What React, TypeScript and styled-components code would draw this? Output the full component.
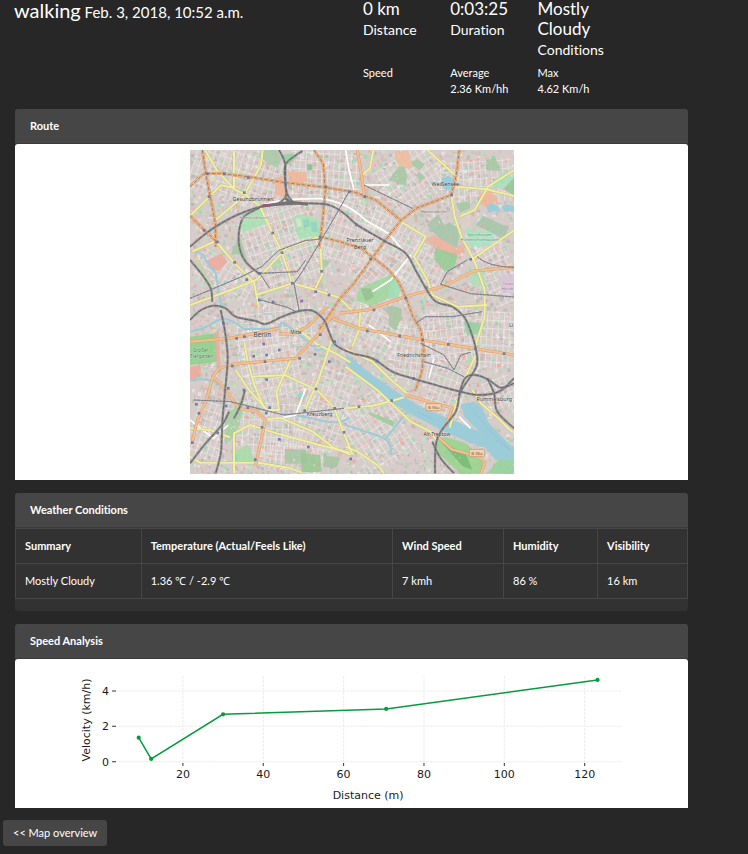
import React from "react";
import styled, { createGlobalStyle } from "styled-components";

const GlobalStyle = createGlobalStyle`
  *, *::before, *::after { box-sizing: border-box; }
  body {
    margin: 0;
    background: #272727;
    color: #fff;
    font-family: Lato, "Liberation Sans", sans-serif;
    font-size: 11px;
    font-variant-ligatures: none;
  }
`;

const Page = styled.div`
  display: flex;
  flex-direction: column;
  align-items: flex-start;
`;

const Header = styled.header`
  display: grid;
  width: 100%;
  grid-template-columns: 4fr 1fr 1fr 1fr 1fr;
  grid-template-rows: auto auto;
  row-gap: 5px;
  padding: 0 36px 0 14px;
`;

const Title = styled.h1`
  grid-row: 1 / span 2;
  margin: 0;
  font-size: 20px;
  font-weight: 400;
  line-height: 20px;
`;

const When = styled.small`
  font-size: 15px;
`;

const Stat = styled.div<{ $column: number }>`
  grid-column: ${(p) => p.$column};
  margin-top: -1px;
  padding-right: 16px;
  line-height: 20px;
`;

const StatValue = styled.div`
  font-size: 17px;
`;

const StatLabel = styled.div`
  padding-top: 1px;
  font-size: 14px;
`;

const Pace = styled.div<{ $column: number }>`
  grid-column: ${(p) => p.$column};
  font-size: 11px;
  line-height: 16px;
  white-space: nowrap;
`;

const Main = styled.main`
  width: 90%;
  margin: 12px 0 12px 15px;
  display: flex;
  flex-direction: column;
  gap: 13px;
`;

const Card = styled.section<{ $squareBottom?: boolean }>`
  overflow: hidden;
  border-radius: ${(p) => (p.$squareBottom ? "3px 3px 0 0" : "3px")};
  background: #323232;
`;

const CardTitle = styled.h2`
  margin: 0;
  padding: 0 15px;
  border-bottom: 1px solid #3a3a3a;
  background: #464646;
  font-size: 11px;
  font-weight: 700;
  line-height: 34px;
`;

const Paper = styled.div<{ $pad: number }>`
  display: flex;
  justify-content: center;
  padding: ${(p) => p.$pad}px 0;
  border-radius: 3px 3px 0 0;
  background: #fff;
`;

const Table = styled.table`
  width: 100%;
  margin-bottom: 12px;
  border-collapse: collapse;
  table-layout: fixed;
  text-align: left;
`;

const Col = styled.col<{ $share: number }>`
  width: ${(p) => p.$share}%;
`;

const Cell = styled.td`
  height: 35px;
  padding: 0 9px 1px;
  border: 1px solid #464646;
  font-weight: 400;
`;

const HeadCell = styled(Cell)`
  font-weight: 700;
`;

const MapDrawing = styled.svg`
  display: block;
  width: 324px;
  max-width: 100%;
  height: auto;
`;

const ChartDrawing = styled.svg`
  display: block;
  width: 100%;
  height: auto;
  font-family: "DejaVu Sans", sans-serif;
  font-size: 11px;
`;

const BackLink = styled.a`
  margin-left: 3px;
  padding: 0 10px;
  border-radius: 3px;
  background: #464646;
  color: #fff;
  font-size: 11px;
  line-height: 26px;
  text-decoration: none;
`;

/* Small deterministic generator for the building blocks of the map. */
function makeRandom(seed: number) {
  let s = seed;
  return () => {
    s = (s * 16807) % 2147483647;
    return s / 2147483647;
  };
}

const blockColors = ["#bfb5b1", "#cac1bd", "#c9bdb8", "#ebe5e3", "#e2cbc8", "#aedcb2", "#c4e4c6", "#e8b3ae", "#eadfe2", "#b9b4b6", "#97dcb3", "#efab9c"];
const random = makeRandom(4217);
const blocks = Array.from({ length: 6000 }, () => ({
  x: 13 + random() * 972,
  y: 15 + random() * 972,
  w: 3 + random() * 9,
  h: 3 + random() * 9,
  c: blockColors[Math.floor(Math.pow(random(), 1.25) * blockColors.length)],
}));

type Point = [number, number];

/* Catmull-Rom curve through the given points. */
function smooth(points: Point[]) {
  const at = (i: number) => points[Math.max(0, Math.min(points.length - 1, i))];
  let d = `M${points[0][0]} ${points[0][1]}`;
  for (let i = 0; i < points.length - 1; i++) {
    const [a, b, c, e] = [at(i - 1), at(i), at(i + 1), at(i + 2)];
    d += `C${b[0] + (c[0] - a[0]) / 6} ${b[1] + (c[1] - a[1]) / 6} ${c[0] - (e[0] - b[0]) / 6} ${c[1] - (e[1] - b[1]) / 6} ${c[0]} ${c[1]}`;
  }
  return d;
}

type Area = { d: string; c: string };

const northWestAreas: Area[] = [
  { d: "M228 15l45 0 15 25-12 28-26-8-28-28z", c: "#a9c9a9" },
  { d: "M291 30l30-5 15 12-30 22z", c: "#8dd49b" },
  { d: "M305 80l55 0 5 30-50 10z", c: "#f0b595" },
  { d: "M268 98l30-5 0 66-30-12z", c: "#f0b595" },
  { d: "M365 58l15 0 0 18-15 0z", c: "#7fbf8c" },
  { d: "M176 205q30-18 55-10l12 40-72 30q-8-20 5-60z", c: "#a6e3b4" },
  { d: "M320 218l28-10 48 12 6 50-62 12z", c: "#a6e3b4" },
  { d: "M330 222l14-3 5 24-14 4z", c: "#d6e5d4" },
  { d: "M352 225l18-4 4 22-18 5z", c: "#8cd6c0" },
  { d: "M375 232l18-2 4 30-18 2z", c: "#8cd6c0" },
  { d: "M162 275l24 75-26-22-24 2 8-24z", c: "#a4c9a2" },
  { d: "M405 342l30 5-22 34z", c: "#a9c9a9" },
  { d: "M250 352l30-8 12 22-28 8z", c: "#b4d2b0" },
  { d: "M20 345l20 0 50 85-15 10z", c: "#c5d0ad" },
  { d: "M60 348l45-22 20 24-25 28-20-4z", c: "#eda99e" },
];

const northEastAreas: Area[] = [
  { d: "M148 18l40 0 14 50-30 4-24-30z", c: "#efbc9c" },
  { d: "M128 105l32-42 15 3 10 28-5 28z", c: "#a5c8a1" },
  { d: "M198 50l16-8 24 15-16 17-22-12z", c: "#a5c8a1" },
  { d: "M208 90l14-8 17 15-14 12z", c: "#a5c8a1" },
  { d: "M420 45l30-5 16 38-45-2z", c: "#a5c8a1" },
  { d: "M400 145l38-10 15 32-32 20-20-14z", c: "#f0b595" },
  { d: "M452 100l25-18 28 15-30 30-38 4z", c: "#a2e3b8" },
  { d: "M475 130l32-35v60z", c: "#91c894" },
  { d: "M330 175l40-6 5 20-32 14z", c: "#a5c8a1" },
  { d: "M243 240l34-32 20 32 14-8 32 22-8 55-48-22z", c: "#a5c5a8" },
  { d: "M235 285l30-15 70 38 18-14 3 28-40 15z", c: "#efb19c" },
  { d: "M268 308l68 22-10 40-28 10-32-38z", c: "#94cc93" },
  { d: "M355 245l45 15 50 0-18 42-60 5z", c: "#a5e5c0" },
  { d: "M390 240l22-27 75 34-10 38-38-22z", c: "#a5c5a8" },
  { d: "M343 225q15-20 30-6l2 28-22 8z", c: "#dcd0c7" },
  { d: "M40 430l95-40 20 14-12 50-65 28-48-15z", c: "#9fd79d" },
  { d: "M45 430l30 0 10 25-25 15z", c: "#97bf91" },
  { d: "M130 422l20-20 18 20-12 40-28-5z", c: "#9de1bb" },
  { d: "M467 390l40-3v56h-40z", c: "#d7c4d6" },
  { d: "M370 388l42-10 8 42-42 5z", c: "#b0dfb7" },
  { d: "M110 490l30-8 28 10 0 26-20 40-20-20 3-30z", c: "#a6c6a0" },
];

const southWestAreas: Area[] = [
  { d: "M13 95l80-10 5 85-85 10z", c: "#8ed18a" },
  { d: "M13 185l30-4 5 25-22 18-13 0z", c: "#eca89e" },
  { d: "M88 80l12-3 5 110-12 2z", c: "#eeaaa0" },
  { d: "M118 330l28-20 32-50-16 100-30 50-15 2z", c: "#a3cfa0" },
  { d: "M298 432l64 2v42h-64z", c: "#a5c6a2" },
  { d: "M345 445l58 5 5 50-60 2z", c: "#98c892" },
  { d: "M413 452l50 5-8 30-40 0z", c: "#a5c6a2" },
  { d: "M148 438l38-20 20 42-10 18-50-6z", c: "#a7dda6" },
  { d: "M335 268l18-8 5 20-18 8z", c: "#8bd9c2" },
  { d: "M140 450l16-2v24h-16z", c: "#8bd9c2" },
];

const southEastAreas: Area[] = [
  { d: "M354 48l60 8-20 32-30 4z", c: "#90d19e" },
  { d: "M70 320l78 30-5 16-75-38z", c: "#99cf99" },
  { d: "M275 405l22-10 65 20 58 55-20 35-55 2-70-65z", c: "#95d58c" },
  { d: "M425 505l25-32 35-28 22 15v47z", c: "#93d39d" },
  { d: "M290 415l70 30 20 50-30-12z", c: "#79ba75" },
];

const water = [
  "M16 318q30-3 42 22t32 44l10 62 8 40",
  "M13 560q45-8 72-28t60 0 28 20 55 0 58-15 50 28 55 50 68-24",
  "M13 707q70-14 102 22",
  "M285 805q70 8 125 22t80-10",
  "M480 840l105 35q35 15 30 55",
  "M600 880l70-85 20-10",
];

const majorRoads = [
  "M13 125l40-38 45-2 90 10 110 18 120 14 90 15 60 22 77 61",
  "M50 15l10 70 18 90 12 65 0 65",
  "M13 212l42 42 40 38",
  "M402 275l60 15 65 20 35 28 45 35 30 35 24 50 22 60 22 35 10 60-7 70-20 55",
  "M821 15l-10 80-14 55-105 40-50 40-42 55-45 60-50 70-45 50-60 90",
  "M385 15l28 42 6 78-8 90-6 50-5 35",
  "M460 505l85-10 105-37 125-35 90-45 125-12",
  "M13 590l120-10 150-30",
  "M280 566l42 2 50-28 50-55",
  "M82 695l18-25 40-12 190-18 75-80 40-58",
  "M440 520l80 30 190 35 90 15 185 30",
  "M82 695l22 20 30 40 25 35 55 10 25 25-12 58-18 80",
  "M20 890l14-60 28-65 20-70",
  "M660 750l75 22 65 16-20 55",
  "M748 868l50 45 80 22 20 15-15 45",
  "M515 15l10 60 12 80",
];

const minorRoads = [
  "M60 18l35 60 52 55 30 15 45 35 35 75 30 60 30 90",
  "M13 213l50-50 42-42 42 8",
  "M145 20v108",
  "M176 150l50-90 5-45",
  "M13 480l130-48 70-28 90-95 100-34",
  "M405 310l4 80-20 40",
  "M210 450l110-35 65 18 75 25 45 45",
  "M20 320l70-32 55 65 60 60 15 75",
  "M90 225l85-72",
  "M645 230l75 45-35 60 40 70 15 45 75 35 90-5",
  "M563 15l-10 55-30 25",
  "M725 15l50 45 38 35",
  "M797 150l10 65 20 60 40 75 30 85 0 80-30 95",
  "M812 125l90 8 83 20",
  "M985 75l-78 50-40 70-45 20",
  "M985 256l-65 45-65 45",
  "M176 590l10 60 20 70 30 70",
  "M150 675l40 60 55 60 35 0-8-55 50-110",
  "M200 695l100-4 95 45 50 52 55 140",
  "M440 580l-40 120-42 95",
  "M330 548l65 50 60 30 40 25",
  "M13 850l60 5 60 22",
  "M145 985v-120l48-25 90 28 110 30 100 25",
  "M245 822l40-3 95 40 65 50 50 20",
  "M13 935l30 18 175 0 90 15 40 15",
  "M480 665l95 70 100 95 60 30 20 30",
  "M480 612l80 38 60 58 50 42",
  "M480 905l35 15 60 40 20 25",
  "M869 633l-35 75-20 60-22 80",
  "M480 790l80-8 60-15 35-10",
  "M525 480l-5 75-20 50",
  "M860 735l25 40 45 38 50 48",
];

const railways = ([
  [[13, 305], [75, 255], [150, 212], [230, 184], [300, 178], [370, 175], [430, 180], [475, 205], [515, 240], [595, 287], [660, 325], [695, 385], [745, 465], [800, 485], [835, 515], [852, 550], [870, 610], [872, 665], [825, 740], [810, 800], [755, 880], [748, 985]],
  [[280, 15], [298, 55], [299, 115], [306, 150], [325, 175]],
  [[350, 18], [300, 58], [300, 120], [300, 155], [275, 178]],
  [[222, 188], [175, 215], [160, 260], [162, 310], [180, 350], [222, 388]],
  [[13, 345], [50, 390], [75, 430], [80, 470]],
  [[13, 525], [45, 496], [85, 482], [120, 490], [150, 515], [210, 528], [240, 537], [290, 515], [340, 498], [380, 497], [415, 525], [430, 560], [450, 600], [500, 625], [560, 640], [620, 680], [680, 700], [750, 720], [825, 740], [880, 750], [940, 740], [985, 700]],
  [[105, 495], [118, 560], [126, 640], [118, 740], [110, 830], [106, 920], [90, 985]],
  [[820, 750], [838, 700], [870, 690], [910, 705], [945, 728], [985, 715]],
  [[905, 700], [925, 745], [935, 800], [985, 850]],
  [[740, 890], [765, 940], [805, 985]],
  [[13, 955], [60, 895], [110, 838], [130, 800]],
  [[178, 735], [165, 780], [145, 820]],
] as Point[][]).map(smooth);

const tramRoads = [
  "M490 140l-45 80-95 160-25 35 15 80",
  "M225 385l110-5 25-35",
  "M13 460l60-25 95-40 60-30 50-48 80-30 45-5",
  "M225 465l80 22 30 15",
  "M222 385l30 45",
  "M535 120l145 70",
  "M765 418l90 28 130 10",
  "M765 418l20-38 60-35",
  "M875 335q30 30 110 32",
  "M25 765l110 5 160 40 180-20",
  "M690 535l30-20 80 0 90-15",
  "M705 595l70 35 30 45 20-45 30-8",
  "M715 650l70 20 50 25",
];

const stations: Point[] = [
  [65, 86], [116, 86], [188, 98], [299, 115], [421, 126], [176, 143], [70, 155], [491, 140], [261, 264], [289, 323], [147, 352],
  [403, 276], [415, 177], [55, 256], [95, 291], [183, 404], [223, 385], [221, 465], [262, 471], [348, 468], [408, 379], [390, 440],
  [430, 450], [320, 415], [113, 535], [176, 575], [153, 580], [234, 597], [204, 634], [243, 630], [281, 615], [238, 650],
  [140, 663], [243, 704], [404, 569], [388, 628], [342, 640], [447, 590], [431, 650], [391, 732], [32, 778], [128, 730],
  [175, 735], [40, 805], [121, 783], [187, 788], [242, 804], [252, 788], [96, 864], [229, 847], [20, 893], [281, 883],
  [368, 906], [209, 944], [447, 790], [357, 797], [475, 862], [545, 558], [642, 573], [711, 585], [788, 598], [869, 612],
  [684, 700], [520, 785], [618, 767], [825, 740], [574, 648], [495, 942], [555, 342], [597, 288], [513, 240], [537, 155],
  [798, 150], [855, 343], [722, 428], [660, 459], [565, 495], [955, 626],
];

const greyStreets = [
  [13, 15, 290, 160, 18], [180, 190, 230, 230, -18], [315, 15, 210, 140, 4], [410, 160, 170, 200, 18], [585, 25, 190, 150, -33],
  [540, 210, 160, 120, 28], [495, 330, 170, 120, 42], [650, 300, 120, 150, 27], [760, 45, 220, 130, -4], [885, 270, 98, 210, -25],
  [145, 480, 240, 130, -6], [170, 600, 180, 170, -12], [350, 670, 140, 240, 18], [475, 490, 180, 120, 28], [615, 530, 120, 180, 8],
  [715, 490, 150, 160, -7], [865, 500, 120, 170, 3], [480, 750, 180, 220, -32], [145, 770, 210, 180, 3], [18, 770, 110, 170, 18],
  [240, 890, 180, 95, 10], [720, 650, 120, 180, 20], [25, 350, 190, 90, 30], [900, 700, 85, 90, -20],
];

type MapLabel = { x: number; y: number; t: string; s: number; c?: string };
const labels: MapLabel[] = [
  { x: 202, y: 168, t: "Gesundbrunnen", s: 16 },
  { x: 202, y: 221, t: "Humboldthain", s: 12, c: "#906d5b" },
  { x: 779, y: 122, t: "Weißensee", s: 16 },
  { x: 745, y: 204, t: "Heinersdorfer", s: 12, c: "#626262" },
  { x: 523, y: 291, t: "Prenzlauer", s: 16 },
  { x: 523, y: 311, t: "Berg", s: 16 },
  { x: 881, y: 272, t: "Sportforum", s: 13, c: "#338867" },
  { x: 881, y: 288, t: "Hohenschönhausen", s: 12, c: "#338867" },
  { x: 968, y: 420, t: "Gewe", s: 12, c: "#8b668c" },
  { x: 966, y: 436, t: "Herzb", s: 12, c: "#8b668c" },
  { x: 230, y: 577, t: "Berlin", s: 19 },
  { x: 331, y: 567, t: "Mitte", s: 14 },
  { x: 45, y: 620, t: "Großer", s: 14, c: "#367855" },
  { x: 48, y: 638, t: "Tiergarten", s: 14, c: "#367855" },
  { x: 402, y: 813, t: "Kreuzberg", s: 16 },
  { x: 685, y: 635, t: "Friedrichshain", s: 15 },
  { x: 976, y: 546, t: "Li", s: 16 },
  { x: 926, y: 768, t: "Rummelsburg", s: 16 },
  { x: 754, y: 872, t: "Alt-Treptow", s: 15 },
  { x: 242, y: 510, t: "Spree", s: 10, c: "#5c9bb4" },
  { x: 389, y: 605, t: "Spree", s: 12, c: "#5c9bb4" },
];

function Areas({ items }: { items: Area[] }) {
  return <>{items.map((a) => <path key={a.d} d={a.d} fill={a.c} opacity="0.85" />)}</>;
}

function Lines({ items, color, width, dash }: { items: string[]; color: string; width: number; dash?: string }) {
  return (
    <g fill="none" stroke={color} strokeWidth={width} strokeDasharray={dash} strokeLinejoin="round">
      {items.map((d) => <path key={d} d={d} />)}
    </g>
  );
}

function CityMap() {
  return (
    <MapDrawing viewBox="13 15 972 972" role="img" aria-label="Route map of Berlin">
      <defs>
        <pattern id="streets" width="17" height="25" patternUnits="userSpaceOnUse">
          <path d="M0 1H17M1 0V25" stroke="#f5f3f2" strokeWidth="2" fill="none" />
        </pattern>
      </defs>
      <rect x="13" y="15" width="972" height="972" fill="#d6cdca" />
      {blocks.map((b, i) => <rect key={i} x={b.x} y={b.y} width={b.w} height={b.h} fill={b.c} opacity="0.8" />)}
      {greyStreets.map(([x, y, w, h, angle], i) => (
        <g key={i} transform={`rotate(${angle} ${x + w / 2} ${y + h / 2})`}>
          <rect x={x} y={y} width={w} height={h} fill="url(#streets)" opacity="0.8" />
        </g>
      ))}
      <Areas items={northWestAreas} />
      <g transform="translate(480 0)"><Areas items={northEastAreas} /></g>
      <g transform="translate(0 480)"><Areas items={southWestAreas} /></g>
      <g transform="translate(480 480)"><Areas items={southEastAreas} /></g>
      {blocks.slice(0, 1400).map((b, i) => <rect key={i} x={b.x} y={b.y} width={b.w / 2} height={b.h / 2} fill={b.c} opacity="0.8" />)}
      <Lines items={water} color="#9bcbd9" width={6} />
      <g fill="#9dccd9">
        <path d="M480 625L560 690 640 745 700 783 780 817 860 850 900 872 930 885 985 905V945H930L900 910 850 892 780 862 690 815 630 780 545 720 480 655Z" />
        <path d="M825 778l40-8 25 20 20 45 75 77v25l-65-40-50-48-35-35z" />
        <path d="M768 100l20-8 18 12 0 28-25 4-15-18z" />
        <path d="M902 185l16-12 20 12 8 16-25-2-12 6z" />
        <path d="M948 185l12-7 28 6v16l-32 0z" />
      </g>
      <path d="M695 800l50 25M852 785l55 65 70 70M930 885l45 30" stroke="#8caecb" strokeWidth="2" strokeDasharray="5 4" fill="none" />
      <g fill="none" stroke="#fff" strokeWidth="5">
        <path d="M225 183q60-25 180-22 80 10 135 65l70 40 45 55" />
        <path d="M675 330l-60 75-55 35M535 120l75 0M730 700l15-60M550 540l65 50M13 825l70 55 45-40M820 815l35 35M360 730l-30 80-50 10M480 15l10 60 15 60" />
      </g>
      <Lines items={minorRoads} color="#bcbc88" width={8} />
      <Lines items={minorRoads} color="#f2efa0" width={6} />
      <Lines items={majorRoads} color="#d79e6f" width={9} />
      <Lines items={majorRoads} color="#f3c08e" width={6} />
      <Lines items={majorRoads.slice(0, 6)} color="#9b7f6c" width={3} dash="12 4" />
      <g fill="none" stroke="#8d8d83" strokeWidth="3">
        {tramRoads.map((d) => <path key={d} d={d} />)}
        <g stroke="#7e819f" strokeDasharray="7 4">{tramRoads.map((d) => <path key={d} d={d} />)}</g>
      </g>
      <Lines items={railways} color="#929192" width={7} />
      <Lines items={railways} color="#666568" width={3} dash="13 4" />
      <path d="M227 184l90-12 50 6M300 160l20 18" stroke="#757274" strokeWidth="9" fill="none" />
      <path d="M232 181h20" stroke="#a94e68" strokeWidth="7" />
      <g fill="#6873a5">
        {stations.map(([x, y]) => <rect key={`${x}-${y}`} x={x - 4} y={y - 4} width="8" height="8" opacity="0.9" />)}
      </g>
      {[{ x: 744, y: 787 }, { x: 874, y: 924 }].map((s) => (
        <g key={s.y}>
          <rect x={s.x - 23} y={s.y - 11} width="46" height="21" rx="3" fill="#f4d3ab" stroke="#c68e72" strokeWidth="2" />
          <text x={s.x} y={s.y + 5} textAnchor="middle" fontFamily="Noto Sans, sans-serif" fontSize="13" fill="#775748">B 96a</text>
        </g>
      ))}
      <g fontFamily="Noto Sans, sans-serif" textAnchor="middle">
        {labels.map((l) => (
          <text key={`${l.t}-${l.x}`} x={l.x} y={l.y} fontSize={l.s} fill={l.c ?? "#343434"} stroke="#fff" strokeOpacity="0.55" strokeWidth="2" paintOrder="stroke">{l.t}</text>
        ))}
      </g>
    </MapDrawing>
  );
}

const xTicks = [20, 40, 60, 80, 100, 120];
const yTicks = [0, 2, 4];
const samples: Point[] = [[9, 1.36], [12.1, 0.16], [30, 2.68], [70.6, 2.98], [123.2, 4.62]];
const toX = (m: number) => 87.5 + m * 4.017;
const toY = (v: number) => 103.7 - v * 17.7;

function SpeedChart() {
  return (
    <ChartDrawing viewBox="0 1 673 149" role="img" aria-label="Velocity in km/h by distance in metres">
      <g stroke="#ececec" strokeDasharray="3 1">
        {xTicks.map((t) => <line key={t} x1={toX(t)} x2={toX(t)} y1="18" y2="104" />)}
        {yTicks.map((t) => <line key={t} x1="103" x2="606" y1={toY(t)} y2={toY(t)} />)}
      </g>
      <g stroke="#333">
        {xTicks.map((t) => <line key={t} x1={toX(t)} x2={toX(t)} y1="105" y2="108" />)}
        {yTicks.map((t) => <line key={t} x1="97" x2="101" y1={toY(t)} y2={toY(t)} />)}
      </g>
      <g fill="#1a1a1a">
        {xTicks.map((t) => <text key={t} x={toX(t)} y="120" textAnchor="middle">{t}</text>)}
        {yTicks.map((t) => <text key={t} x="94" y={toY(t) + 4} textAnchor="end">{t}</text>)}
        <text x="353" y="141" textAnchor="middle">Distance (m)</text>
        <text transform="translate(75 62) rotate(-90)" textAnchor="middle">Velocity (km/h)</text>
      </g>
      <polyline points={samples.map(([m, v]) => `${toX(m)},${toY(v)}`).join(" ")} fill="none" stroke="#079b3d" strokeWidth="1.5" />
      {samples.map(([m, v]) => <circle key={m} cx={toX(m)} cy={toY(v)} r="2.1" fill="#079b3d" />)}
    </ChartDrawing>
  );
}

const stats = [
  { value: "0 km", label: "Distance" },
  { value: "0:03:25", label: "Duration" },
  { value: "Mostly Cloudy", label: "Conditions" },
];

const weather = [
  { name: "Summary", value: "Mostly Cloudy", share: 18.7 },
  { name: "Temperature (Actual/Feels Like)", value: "1.36 ℃ / -2.9 ℃", share: 37.4 },
  { name: "Wind Speed", value: "7 kmh", share: 16.5 },
  { name: "Humidity", value: "86 %", share: 14 },
  { name: "Visibility", value: "16 km", share: 13.4 },
];

export default function App() {
  return (
    <Page>
      <GlobalStyle />
      <Header>
        <Title>walking<When> Feb. 3, 2018, 10:52 a.m.</When></Title>
        {stats.map((s, i) => (
          <Stat key={s.label} $column={i + 2}>
            <StatValue>{s.value}</StatValue>
            <StatLabel>{s.label}</StatLabel>
          </Stat>
        ))}
        <Pace $column={2}>Speed</Pace>
        <Pace $column={3}>Average<br />2.36 Km/hh</Pace>
        <Pace $column={4}>Max<br />4.62 Km/h</Pace>
      </Header>
      <Main>
        <Card $squareBottom>
          <CardTitle>Route</CardTitle>
          <Paper $pad={6}><CityMap /></Paper>
        </Card>
        <Card>
          <CardTitle>Weather Conditions</CardTitle>
          <Table>
            <colgroup>{weather.map((w) => <Col key={w.name} $share={w.share} />)}</colgroup>
            <thead>
              <tr>{weather.map((w) => <HeadCell as="th" scope="col" key={w.name}>{w.name}</HeadCell>)}</tr>
            </thead>
            <tbody>
              <tr>{weather.map((w) => <Cell key={w.name}>{w.value}</Cell>)}</tr>
            </tbody>
          </Table>
        </Card>
        <Card $squareBottom>
          <CardTitle>Speed Analysis</CardTitle>
          <Paper $pad={0}><SpeedChart /></Paper>
        </Card>
      </Main>
      <BackLink href="#map">&lt;&lt; Map overview</BackLink>
    </Page>
  );
}
